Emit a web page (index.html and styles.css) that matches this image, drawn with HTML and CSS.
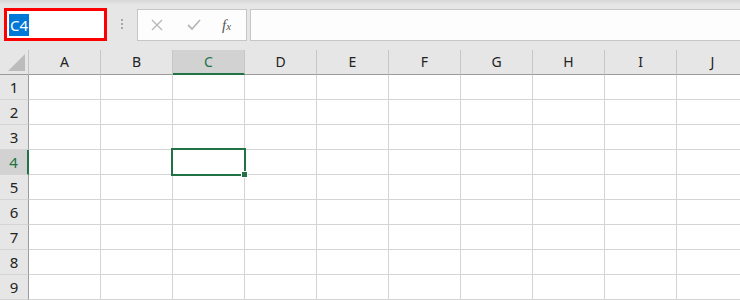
FILE: index.html
```html
<!DOCTYPE html>
<html>
<head>
<meta charset="utf-8">
<title>Sheet</title>
<link rel="stylesheet" href="styles.css">
</head>
<body>
  <div class="toolbar">
    <div class="name-box"><span class="sel-text">C4</span></div>
    <div class="grip"><i></i><i></i><i></i></div>
    <div class="fx-buttons">
      <svg class="btn" width="14" height="14" viewBox="0 0 14 14"><path d="M2 2L12 12M12 2L2 12" stroke="#b8b8b8" stroke-width="1.4" fill="none"/></svg>
      <svg class="btn" width="16" height="14" viewBox="0 0 16 14"><path d="M2 7L6 11L14 2" stroke="#b8b8b8" stroke-width="1.8" fill="none"/></svg>
      <span class="fx">f<small>x</small></span>
    </div>
    <div class="formula"></div>
  </div>

  <div class="sheet">
    <div class="corner"><span class="tri"></span></div>
    <div class="col">A</div><div class="col">B</div><div class="col active">C</div><div class="col">D</div><div class="col">E</div>
    <div class="col">F</div><div class="col">G</div><div class="col">H</div><div class="col">I</div><div class="col">J</div>

    <div class="row">1</div><div class="cell"></div><div class="cell"></div><div class="cell"></div><div class="cell"></div><div class="cell"></div><div class="cell"></div><div class="cell"></div><div class="cell"></div><div class="cell"></div><div class="cell"></div>
    <div class="row">2</div><div class="cell"></div><div class="cell"></div><div class="cell"></div><div class="cell"></div><div class="cell"></div><div class="cell"></div><div class="cell"></div><div class="cell"></div><div class="cell"></div><div class="cell"></div>
    <div class="row">3</div><div class="cell"></div><div class="cell"></div><div class="cell"></div><div class="cell"></div><div class="cell"></div><div class="cell"></div><div class="cell"></div><div class="cell"></div><div class="cell"></div><div class="cell"></div>
    <div class="row active">4</div><div class="cell"></div><div class="cell"></div><div class="cell current"><span class="selection"><span class="handle"></span></span></div><div class="cell"></div><div class="cell"></div><div class="cell"></div><div class="cell"></div><div class="cell"></div><div class="cell"></div><div class="cell"></div>
    <div class="row">5</div><div class="cell"></div><div class="cell"></div><div class="cell"></div><div class="cell"></div><div class="cell"></div><div class="cell"></div><div class="cell"></div><div class="cell"></div><div class="cell"></div><div class="cell"></div>
    <div class="row">6</div><div class="cell"></div><div class="cell"></div><div class="cell"></div><div class="cell"></div><div class="cell"></div><div class="cell"></div><div class="cell"></div><div class="cell"></div><div class="cell"></div><div class="cell"></div>
    <div class="row">7</div><div class="cell"></div><div class="cell"></div><div class="cell"></div><div class="cell"></div><div class="cell"></div><div class="cell"></div><div class="cell"></div><div class="cell"></div><div class="cell"></div><div class="cell"></div>
    <div class="row">8</div><div class="cell"></div><div class="cell"></div><div class="cell"></div><div class="cell"></div><div class="cell"></div><div class="cell"></div><div class="cell"></div><div class="cell"></div><div class="cell"></div><div class="cell"></div>
    <div class="row">9</div><div class="cell"></div><div class="cell"></div><div class="cell"></div><div class="cell"></div><div class="cell"></div><div class="cell"></div><div class="cell"></div><div class="cell"></div><div class="cell"></div><div class="cell"></div>
  </div>
</body>
</html>
```

FILE: styles.css
```css
html {
  font-family: "Noto Sans", "Noto Sans CJK JP", sans-serif;
}

body {
  margin: 0;
  background-color: #e6e6e6;
  overflow: hidden;
}

.toolbar {
  height: 50px;
  box-sizing: border-box;
  padding: 8px 0 0 4px;
  display: flex;
  align-items: flex-start;
  background: linear-gradient(#d8d8d8, #e6e6e6 5px);
}

.name-box {
  width: 103px;
  height: 33px;
  box-sizing: border-box;
  border: 3px solid #ff0000;
  background-color: white;
  padding: 0 0 0 2px;
  display: flex;
  align-items: center;
}

.sel-text {
  background-color: #0078d7;
  color: white;
  font-size: 15px;
  line-height: 22px;
  padding: 0 1px;
}

.grip {
  width: 30px;
  height: 32px;
  display: flex;
  flex-direction: column;
  align-items: center;
  justify-content: center;
  gap: 2px;
}

.grip i {
  width: 2px;
  height: 2px;
  background-color: #a8a8a8;
}

.fx-buttons {
  width: 110px;
  height: 32px;
  margin-top: 1px;
  box-sizing: border-box;
  border: 1px solid #c6c6c6;
  background-color: #fdfdfd;
  display: flex;
  align-items: center;
  padding-left: 12px;
  gap: 22px;
}

.fx {
  font-family: "Liberation Serif", serif;
  font-style: italic;
  font-size: 15px;
  color: #555;
  margin-left: -2px;
}

.fx small {
  font-size: 11px;
}

.formula {
  flex: 1;
  height: 32px;
  margin: 1px 0 0 3px;
  box-sizing: border-box;
  border: 1px solid #c6c6c6;
  border-right: none;
  background-color: #fdfdfd;
}

.sheet {
  display: grid;
  grid-template-columns: 29px repeat(10, 72px);
  grid-auto-rows: 25px;
  background-color: white;
}

.sheet > div {
  box-sizing: border-box;
}

.corner, .col {
  background-color: #e6e6e6;
  border-bottom: 1px solid #9b9b9b;
}

.corner {
  border-right: 1px solid #c6c6c6;
  position: relative;
}

.tri {
  position: absolute;
  left: 8px;
  top: 4px;
  width: 17px;
  height: 17px;
  background-color: #bcbcbc;
  clip-path: polygon(100% 0, 100% 100%, 0 100%);
}

.col {
  border-right: 1px solid #c6c6c6;
  text-align: center;
  font-size: 14px;
  line-height: 24px;
  color: #222;
}

.col.active {
  background-color: #d2d2d2;
  color: #217346;
  border-bottom: 2px solid #217346;
}

.row {
  background-color: #e6e6e6;
  border-right: 1px solid #9b9b9b;
  border-bottom: 1px solid #d4d4d4;
  text-align: center;
  font-size: 15px;
  line-height: 24px;
  color: #222;
}

.row.active {
  background-color: #d2d2d2;
  color: #217346;
  border-right: 2px solid #217346;
}

.cell {
  border-right: 1px solid #d4d4d4;
  border-bottom: 1px solid #d4d4d4;
}

.current {
  position: relative;
}

.selection {
  position: absolute;
  left: -2px;
  top: -2px;
  width: 75px;
  height: 28px;
  box-sizing: border-box;
  border: 2px solid #217346;
}

.handle {
  position: absolute;
  right: -4px;
  bottom: -4px;
  width: 5px;
  height: 5px;
  background-color: #217346;
  border: 1px solid white;
}
```
